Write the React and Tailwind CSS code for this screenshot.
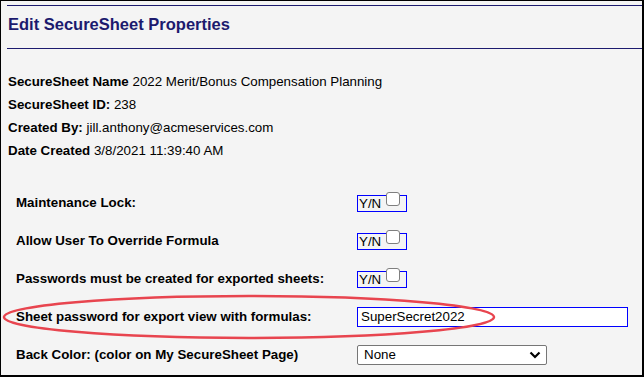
import React from 'react';

const YesNo = () => (
  <span className="inline-flex items-start h-[17px] w-[50px] border border-[#0000ff] text-[13.33px] leading-[15px] font-normal text-black">
    <span className="pl-px">Y/N</span>
    <span className="ml-[5px] -mt-[4px] w-[14px] h-[14px] rounded-[3px] border-[1.5px] border-[#7f7f7f] bg-white" />
  </span>
);

const Row = ({ label, children }) => (
  <div className="grid grid-cols-[341px_1fr] items-center h-[38px]">
    <div className="font-bold text-[13.33px] text-black">{label}</div>
    <div className="flex items-center">{children}</div>
  </div>
);

const App = () => {
  return (
    <div
      className="relative w-[644px] h-[377px] bg-[#f4f4f4] border-l border-t border-r-2 border-b-2 border-black overflow-hidden"
      style={{ fontFamily: '"Liberation Sans", Arial, sans-serif' }}
    >
      {/* header */}
      <div className="ml-[6px] mt-[4px] h-[44px] border-t border-b border-[#1c1a6e]">
        <h1 className="pl-px pt-[8px] text-[16.5px] leading-[20px] font-bold text-[#1c1a6e]">
          Edit SecureSheet Properties
        </h1>
      </div>

      {/* sheet info */}
      <div className="mt-[21px] pl-[7px] text-[13.33px] leading-[23px] text-black">
        <div><span className="font-bold">SecureSheet Name</span> 2022 Merit/Bonus Compensation Planning</div>
        <div><span className="font-bold">SecureSheet ID:</span> 238</div>
        <div><span className="font-bold">Created By:</span> jill.anthony@acmeservices.com</div>
        <div><span className="font-bold">Date Created</span> 3/8/2021 11:39:40 AM</div>
      </div>

      {/* settings */}
      <div className="mt-[22px] pl-[15px]">
        <Row label="Maintenance Lock:"><YesNo /></Row>
        <Row label="Allow User To Override Formula"><YesNo /></Row>
        <Row label="Passwords must be created for exported sheets:"><YesNo /></Row>
        <Row label="Sheet password for export view with formulas:">
          <div className="w-[271px] h-[20px] border border-[#0000ff] bg-white pl-[3px] text-[13.33px] leading-[18px] font-normal text-black">
            SuperSecret2022
          </div>
        </Row>
        <Row label="Back Color: (color on My SecureSheet Page)">
          <div className="flex items-center justify-between w-[190px] h-[20px] border border-[#767676] rounded-[2px] bg-white pl-[6px] pr-[5px] text-[13.33px] font-normal text-black">
            <span>None</span>
            <svg width="12" height="8" viewBox="0 0 12 8">
              <path d="M1.5 1.5 L6 6 L10.5 1.5" fill="none" stroke="#000" strokeWidth="2.2" />
            </svg>
          </div>
        </Row>
      </div>

      {/* highlight */}
      <svg className="absolute left-0 top-0 pointer-events-none" width="644" height="377">
        <ellipse cx="248" cy="316" rx="245" ry="21" fill="none" stroke="#e8454f" strokeWidth="2.5" />
      </svg>
    </div>
  );
};

export default App;
